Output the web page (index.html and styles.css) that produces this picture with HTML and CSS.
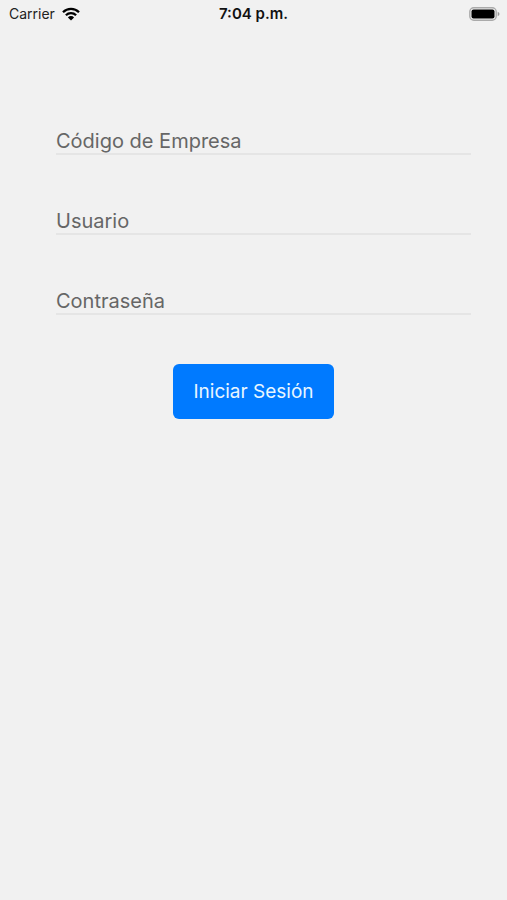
FILE: index.html
```
<!DOCTYPE html>
<html lang="es">
<head>
  <meta charset="UTF-8">
  <meta name="viewport" content="width=device-width, initial-scale=1">
  <title>Iniciar Sesión</title>
  <link rel="stylesheet" href="styles.css">
</head>
<body>
  <header class="status-bar">
    <div class="carrier">
      <span>Carrier</span>
      <svg class="wifi" viewBox="0 0 18 14" aria-hidden="true">
        <path d="M1 5.2a11.4 11.4 0 0 1 16 0M3.9 8.3a7.2 7.2 0 0 1 10.2 0" fill="none" stroke="#000" stroke-width="2.3"/>
        <path d="M9 13.6 5.9 10.4a4.4 4.4 0 0 1 6.2 0z"/>
      </svg>
    </div>
    <div class="time">7:04 p.m.</div>
    <div class="battery">
      <svg viewBox="0 0 31 14" aria-hidden="true">
        <rect x="0.8" y="0.8" width="26.4" height="12.4" rx="4" fill="none" stroke="#aaa" stroke-width="1.4"/>
        <rect x="2.5" y="2.5" width="23" height="9" rx="2"/>
        <path d="M28.7 4.8v4.4q1.8-.7 1.8-2.2t-1.8-2.2z" fill="#999"/>
      </svg>
    </div>
  </header>
  <main>
    <form class="login">
      <input class="campo" type="text" name="empresa" placeholder="Código de Empresa" aria-label="Código de Empresa">
      <input class="campo" type="text" name="usuario" placeholder="Usuario" aria-label="Usuario">
      <input class="campo" type="password" name="contrasena" placeholder="Contraseña" aria-label="Contraseña">
    </form>
    <div class="acciones">
      <button class="boton" type="button">Iniciar Sesión</button>
    </div>
  </main>
</body>
</html>
```
FILE: styles.css
```
* { box-sizing: border-box; }
body { margin: 0; min-height: 100vh; background: #f1f1f1; font-family: Inter, "Liberation Sans", sans-serif; }
.status-bar { display: grid; grid-template-columns: 1fr auto 1fr; align-items: center; height: 27px; padding: 0 7px; font-size: 14px; color: #222; }
.carrier { display: flex; align-items: center; gap: 7px; padding-left: 2px; }
.wifi { width: 18px; height: 14px; }
.time { font-size: 15px; font-weight: 600; color: #111; }
.battery { display: flex; justify-content: flex-end; }
.battery svg { width: 31px; height: 14px; }
.login { display: flex; flex-direction: column; gap: 52px; padding: 100px 36px 0 56px; }
.campo { width: 100%; height: 28px; padding: 2px 0 0; border: none; border-bottom: 2px solid #e5e5e5; border-radius: 0; background: transparent; font-family: inherit; font-size: 20px; color: #222; outline: none; }
.campo::placeholder { color: #666; opacity: 1; }
.acciones { display: flex; justify-content: center; padding-top: 49px; }
.boton { height: 55px; padding: 0 20px; border: none; border-radius: 6px; background: #007aff; color: #e8f6ff; font-family: inherit; font-size: 19px; cursor: pointer; }
```
